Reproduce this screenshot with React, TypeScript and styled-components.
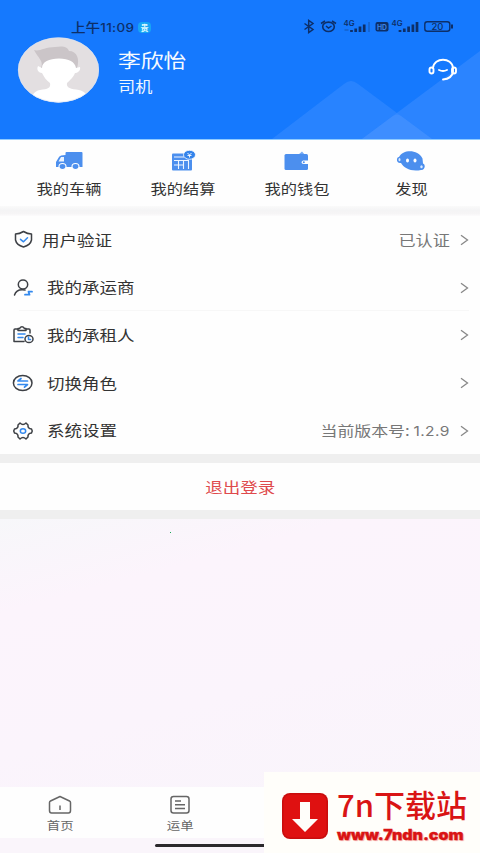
import React from "react";
import styled, { createGlobalStyle } from "styled-components";

const Global = createGlobalStyle`
  * { box-sizing: border-box; }
  body { margin: 0; background: #fbf5fc; font-family: "Noto Sans", "Noto Sans CJK SC", sans-serif; }
`;

const Page = styled.main`
  position: relative;
  width: 480px;
  height: 853px;
  overflow: hidden;
  display: flex;
  flex-direction: column;
  background: #fbf5fc;
`;

const Label = styled.span<{ $size?: number; $color?: string; $origin?: string; $weight?: number; $stretch?: number }>`
  display: block;
  white-space: nowrap;
  line-height: 1.4;
  font-family: "Noto Sans CJK SC", sans-serif;
  font-size: ${(p) => p.$size ?? 14.6}px;
  font-weight: ${(p) => p.$weight ?? 400};
  color: ${(p) => p.$color ?? "#333"};
  transform: scaleX(${(p) => p.$stretch ?? 1.2});
  transform-origin: ${(p) => p.$origin ?? "left"} center;
`;

const Digits = styled.span`
  font-family: Inter, sans-serif;
  font-size: 0.92em;
  letter-spacing: 0.3px;
`;

const Header = styled.header`
  position: relative;
  height: 140px;
  flex: none;
  background: #1579fe;
  border-bottom: 1px solid #8fcbff;
`;

const Mountains = styled.svg`
  position: absolute;
  right: 0;
  bottom: 0;
`;

const StatusBar = styled.div`
  position: relative;
  height: 37px;
  padding: 16px 26px 0 71px;
  display: flex;
  justify-content: space-between;
  color: #0d2f68;
`;

const Clock = styled.div`
  display: flex;
  height: 22px;
  align-items: center;
`;

const ClockText = styled.div`
  width: 67px;
`;

const AppBadge = styled.span`
  width: 13px;
  height: 11px;
  border-radius: 4px;
  background: #17a5f5;
  color: #dffaff;
  font: 700 8px/11px "Noto Sans CJK SC", sans-serif;
  text-align: center;
`;

const Profile = styled.div`
  position: relative;
  display: flex;
  padding: 0 22px 0 17px;
`;

const Names = styled.div`
  margin: 10px 0 0 19px;
  flex: 1;
  display: flex;
  flex-direction: column;
  gap: 2px;
`;

const Support = styled.svg`
  margin-top: 21px;
`;

const Shortcuts = styled.nav`
  height: 66px;
  flex: none;
  display: grid;
  grid-template-columns: repeat(4, 114.2px);
  padding-left: 11.5px;
  background: #fefefe;
`;

const Shortcut = styled.div`
  display: flex;
  flex-direction: column;
  align-items: center;
  padding-top: 10px;
  svg { margin-bottom: 7px; }
`;

const Divider = styled.div<{ $h: number; $soft?: boolean }>`
  height: ${(p) => p.$h}px;
  flex: none;
  background: ${(p) => (p.$soft ? "linear-gradient(#fafafa, #f4f4f5 45%, #f6f5f6 75%, #fcfbfc)" : "#efefef")};
`;

const Menu = styled.section`
  flex: none;
  height: 238px;
  background: #fefefe;
`;

const Row = styled.div<{ $line?: boolean; $indent?: number }>`
  height: 47.7px;
  margin-right: 11px;
  padding-left: 11px;
  display: grid;
  grid-template-columns: ${(p) => p.$indent ?? 36}px 1fr auto 9px;
  align-items: center;
  background: ${(p) => (p.$line ? "linear-gradient(#f7f7f7, #f7f7f7) 19px 100% / 100% 1px no-repeat" : "none")};
`;

const Value = styled.div`
  padding-right: 10.5px;
`;

const Logout = styled.div`
  flex: none;
  height: 47px;
  padding-top: 1px;
  display: flex;
  align-items: center;
  justify-content: center;
  background: #fefefe;
`;

const Blank = styled.div`
  flex: 1;
  background: linear-gradient(165deg, #f7f7fa 0%, #fcf4fc 24%, #fbf4fc 60%, #f9f5fb 100%);
`;

const Speck = styled.i`
  display: block;
  width: 1px;
  height: 1px;
  margin: 13px 0 0 170px;
  background: #1ba65a;
`;

const Tabs = styled.nav`
  flex: none;
  height: 51px;
  display: flex;
  background: #fefefe;
`;

const Tab = styled.div`
  width: 120px;
  padding-top: 8px;
  display: flex;
  flex-direction: column;
  align-items: center;
  svg { margin-bottom: 3px; }
`;

const HomeArea = styled.div`
  flex: none;
  height: 15px;
  padding: 6px 0 0 155px;
  background: #faf5fb;
`;

const HomeBar = styled.div`
  width: 170px;
  height: 3px;
  border-radius: 2px;
  background: #2b292c;
`;

const Brand = styled.aside`
  position: absolute;
  right: 0;
  bottom: 0;
  width: 216px;
  height: 81px;
  padding: 21px 0 0 18px;
  display: flex;
  gap: 9px;
  background: #fffefa;
`;

const BrandText = styled.div`
  margin-top: -8px;
`;

const BrandName = styled.div`
  height: 39px;
  white-space: nowrap;
  font: 500 31px/38px "Noto Sans CJK SC", sans-serif;
  color: #d91414;
`;

const BrandUrl = styled.div`
  width: max-content;
  margin-top: 3px;
  font: 900 14px/16px Inter, sans-serif;
  color: #d91414;
  -webkit-text-stroke: 0.3px #d91414;
  transform: scaleX(1.14);
  transform-origin: left;
  text-shadow: 1px 1px 1px #f7b5b0;
`;

const dark = "#3d4045";
const blue = "#3389ee";
const soft = "#4c8fee";

const SystemIcons = () => (
  <svg width="151" height="22" viewBox="303 16 151 22" fill="none" stroke="#0d2f68">
    <path d="M304.500 23.500l8.500 6-4.300 3V20.500l4.300 3-8.500 6" strokeWidth="1.500" />
    <ellipse cx="328.500" cy="26.800" rx="5.800" ry="4.700" strokeWidth="1.600" />
    <path d="M321 23.500l4-2.500M336 23.500l-4-2.500M326 26l2.500 2 3-2" strokeWidth="1.500" />
    <path d="M351.500 32v-2M355.700 32v-3.500M360 32v-5.500M364.200 32v-7.500" strokeWidth="2.700" />
    <path d="M369 32v-10M344.500 30h4" stroke="#1562ca" strokeWidth="1.500" />
    <rect x="375.500" y="22" width="13" height="9.500" rx="2" fill="#0d2f68" stroke="none" />
    <path d="M400 32v-2M404.300 32v-3.500M408.600 32v-5.500M412.900 32v-7.500M417 32V22" strokeWidth="2.700" />
    <rect x="424.800" y="21.800" width="25" height="9.500" rx="2.500" strokeWidth="1.400" />
    <path d="M452 24.500v4" strokeWidth="2" />
    <g fill="#0d2f68" stroke="none" fontFamily="Inter, sans-serif">
      <text x="343.500" y="25.500" fontSize="7" fontWeight="600" textLength="11" lengthAdjust="spacingAndGlyphs">4G</text>
      <text x="377" y="29.500" fontSize="7" fontWeight="700" fill="#3a83e6" textLength="10" lengthAdjust="spacingAndGlyphs">HD</text>
      <text x="391.500" y="25.500" fontSize="7" fontWeight="600" textLength="11" lengthAdjust="spacingAndGlyphs">4G</text>
      <text x="431.500" y="29.800" fontSize="8.500" fontWeight="500" textLength="12" lengthAdjust="spacingAndGlyphs">20</text>
    </g>
  </svg>
);

const Avatar = () => (
  <svg width="82" height="66" viewBox="0 0 82 66">
    <defs><clipPath id="face"><ellipse cx="41.500" cy="33" rx="40.500" ry="32.500" /></clipPath></defs>
    <g clipPath="url(#face)">
      <rect width="82" height="66" fill="#e3dfe1" />
      <path d="M24 31C27 24 21 21 17 13c5 2 11-3 21-3 7-1 12-1 14 4 8 0 11 8 8 17z" fill="#cbc5c8" />
      <path d="M25 31c0-6 7-9.500 17-9.500S58 25 59 31l4-1c1 4-3 6-5 6-2 5-5 7-8 10-1 5 4 6 12 7 7 2 9 5 10 13H13c1-7 4-12 10-13 8-1 11-2 10-7-4-3-6-6-8-10-3 0-6-3-4-7z" fill="#fff" />
    </g>
    <ellipse cx="41.500" cy="33" rx="40.200" ry="32.200" fill="none" stroke="#d6e2f5" strokeWidth=".6" />
  </svg>
);

const Truck = () => (
  <svg width="28" height="22" viewBox="0 0 28 22"><path d="M10.500 3q0-1 1-1h15q1 0 1 1v14H1v-5l3-5q1-2 6.500-2z" fill={soft} /><path d="M6 7h3v4.500H3.500z" fill="#eaf3ff" /><g fill={soft} stroke="#fff" strokeWidth="1.100"><ellipse cx="7.500" cy="16.500" rx="3.500" ry="3" /><ellipse cx="20.500" cy="16.500" rx="3.500" ry="3" /></g></svg>
);
const Calculator = () => (
  <svg width="28" height="22" viewBox="0 0 28 22"><rect x="3" y="3.500" width="20" height="17" rx="1" fill={soft} /><path d="M5 7h10M5 10.500h15M5 15h10M9.500 10v9M14.500 10v9M19.500 11v8" stroke="#edf5ff" strokeWidth="1.100" /><ellipse cx="20.500" cy="4.800" rx="6" ry="4.500" fill="#3383eb" stroke="#fff" strokeWidth=".8" /><path d="M18.500 3l2 2 2-2M20.500 5v2.500M18.500 5.500h4" stroke="#fff" fill="none" strokeWidth=".9" /></svg>
);
const Wallet = () => (
  <svg width="28" height="22" viewBox="0 0 28 22"><path d="M15 5l4-3.500 3 3.500z" fill="#75aaf4" /><rect x="1.500" y="4" width="23.500" height="16" rx="1.500" fill={soft} /><path d="M26 10.500h-6q-3 1.800 0 3.600h6z" fill="#fff" /><circle cx="20.800" cy="12.300" r="1" fill={soft} /></svg>
);
const Planet = () => (
  <svg width="30" height="22" viewBox="0 0 30 22"><path d="M3 7C7-1 22-1 26.500 8.500l.5 5c3 1 2 7-2 6.500C15 22 8 18 5 13 0 14 0 7 3 7z" fill={soft} /><ellipse cx="3.500" cy="9.700" rx="1" ry="1.600" fill="#d9e9ff" /><ellipse cx="25.500" cy="16.800" rx="1.200" ry="1.500" fill="#d9e9ff" /><g fill="#fff"><ellipse cx="11.500" cy="10.500" rx="1.500" ry="2" /><ellipse cx="19" cy="10.500" rx="1.500" ry="2" /></g></svg>
);

const Icon = ({ name }: { name: string }) => (
  <svg width="24" height="20" viewBox="0 0 24 20" fill="none" stroke={dark} strokeWidth="1.500" strokeLinecap="round" strokeLinejoin="round">
    {name === "shield" && <><path d="M12.500 1.500q4 2.500 8 2.500v6q-1 5-8 7-7-2-8-7V4q4 0 8-2.500z" /><path d="M9.500 9.300l3 2.500 4-4" stroke={blue} /></>}
    {name === "user" && <><ellipse cx="12" cy="6.500" rx="4.700" ry="4.400" /><path d="M3.500 17q2-6.500 10.500-5" /><path d="M14 16.700h4.500l-1-3H21" stroke={blue} strokeWidth="1.800" /></>}
    {name === "clipboard" && <><path d="M7 4H4q-1 0-1 1v11.500h10M15 4h3q1 0 1 1v3M7 5.500V3.500h1.500q2.500-3.500 5 0H15v2z" /><path d="M7 9h7M7 12.500h5" stroke={blue} /><ellipse cx="18" cy="14" rx="4" ry="3.600" /><path d="M17.500 12v2.500h2" stroke={blue} /></>}
    {name === "switch" && <><ellipse cx="11.700" cy="10" rx="9.300" ry="7.500" /><path d="M16.500 8H7l3-2.500M7 11.500h9.500l-3 2.700" stroke={blue} strokeWidth="1.700" /></>}
    {name === "settings" && <><path d="M7 4l2-2q3 3 6 0l2 2q-.5 3.500 3.500 4 1.500 2 0 4-4 .5-3.500 4l-2 2q-3-3-6 0l-2-2q.5-3.500-3.500-4-1.500-2 0-4Q7.500 7.500 7 4z" /><ellipse cx="12" cy="10" rx="2.700" ry="2.300" stroke={blue} /></>}
  </svg>
);

const Arrow = () => (
  <svg width="9" height="12" viewBox="0 0 9 12" fill="none" stroke="#888" strokeWidth="1.300"><path d="M1 1.300L7.500 6 1 10.700" /></svg>
);

const shortcuts = [
  { label: "我的车辆", icon: <Truck /> },
  { label: "我的结算", icon: <Calculator /> },
  { label: "我的钱包", icon: <Wallet /> },
  { label: "发现", icon: <Planet /> },
];

const rows = [
  { label: "用户验证", icon: "shield", value: "已认证", indent: 31 },
  { label: "我的承运商", icon: "user", line: true },
  { label: "我的承租人", icon: "clipboard" },
  { label: "切换角色", icon: "switch" },
  { label: "系统设置", icon: "settings", value: "当前版本号: ", version: "1.2.9" },
];

export default function App() {
  return (
    <Page>
      <Global />
      <Header>
        <Mountains width="220" height="90" viewBox="260 50 220 90">
          <path d="M272 140l72-55q7-6 14 0l74 55z" fill="#3388ff" opacity=".65" />
          <path d="M362 140L480 52v88z" fill="#3a8cff" opacity=".6" />
          <path d="M362 140l31-23q4-3 8 0l31 23z" fill="#4692ff" opacity=".6" />
        </Mountains>
        <StatusBar>
          <Clock>
            <ClockText>
              <Label $size={12.6} $color="#0d2f68" $weight={500} $stretch={1.16}>上午<Digits>11:09</Digits></Label>
            </ClockText>
            <AppBadge>贵</AppBadge>
          </Clock>
          <SystemIcons />
        </StatusBar>
        <Profile>
          <Avatar />
          <Names>
            <Label $size={19} $color="#f7fbff">李欣怡</Label>
            <Label $size={14.3} $color="#f0f7ff">司机</Label>
          </Names>
          <Support width="30" height="26" viewBox="0 0 30 26" fill="none" stroke="#fff" strokeWidth="1.900" strokeLinecap="round">
            <path d="M5 10C6-1 24-1 25 10v4q-1 6.500-10 7.500" />
            <rect x="1.500" y="9.500" width="4" height="6" rx="2" /><rect x="24" y="9.500" width="4" height="6" rx="2" /><path d="M11 12q4 2 8 0" />
          </Support>
        </Profile>
      </Header>
      <Shortcuts>
        {shortcuts.map((s) => (
          <Shortcut key={s.label}>{s.icon}<Label $size={13.5} $origin="center">{s.label}</Label></Shortcut>
        ))}
      </Shortcuts>
      <Divider $h={10} $soft />
      <Menu>
        {rows.map((r) => (
          <Row key={r.label} $line={r.line} $indent={r.indent}>
            <Icon name={r.icon} />
            <Label>{r.label}</Label>
            <Value>{r.value && <Label $size={r.version ? 14.1 : 14.3} $color="#777" $origin="right">{r.value}{r.version && <Digits>{r.version}</Digits>}</Label>}</Value>
            <Arrow />
          </Row>
        ))}
      </Menu>
      <Divider $h={9} />
      <Logout><Label $color="#df4a4c" $origin="center">退出登录</Label></Logout>
      <Divider $h={9} />
      <Blank><Speck /></Blank>
      <Tabs>
        <Tab>
          <svg width="24" height="20" viewBox="0 0 24 20" fill="none" stroke="#666" strokeWidth="1.500" strokeLinejoin="round"><path d="M1.500 7.500q0-1 1-1.500L12 1.500 21.500 6q1 .5 1 1.500v8q0 2.500-2 2.500h-17q-2 0-2-2.500zM12 10.500V15" /></svg>
          <Label $size={11.2} $color="#666" $origin="center">首页</Label>
        </Tab>
        <Tab>
          <svg width="20" height="20" viewBox="0 0 20 20" fill="none" stroke="#666" strokeWidth="1.500"><rect x="1" y="1.500" width="18" height="16.500" rx="2.500" /><path d="M5 6h6M5 9.700h10M5 13.500h10" /></svg>
          <Label $size={11.2} $color="#666" $origin="center">运单</Label>
        </Tab>
      </Tabs>
      <HomeArea><HomeBar /></HomeArea>
      <Brand>
        <svg width="46" height="46" viewBox="0 0 46 46"><rect width="46" height="46" rx="8" fill="#c90d0d" /><rect x="1.500" y="1.500" width="43" height="43" rx="7" fill="#df1111" /><path d="M18 9h10v17h8L23 39 10 26h8z" fill="#fffefa" /></svg>
        <BrandText>
          <BrandName>7n下载站</BrandName>
          <BrandUrl>www.7ndn.com</BrandUrl>
        </BrandText>
      </Brand>
    </Page>
  );
}
